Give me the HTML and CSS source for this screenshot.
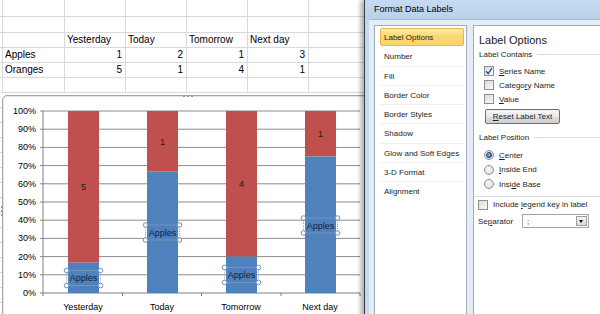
FILE: index.html
```html
<!DOCTYPE html>
<html lang="en">

<head>
    <meta charset="UTF-8">
    <title>Format Data Labels</title>
    <link rel="stylesheet" href="styles.css">
</head>

<body>
    <div class="sheet">
        <div></div><div></div><div></div><div></div><div></div><div></div><div></div><div></div>
        <div></div><div></div><div></div><div></div><div></div><div></div><div></div><div></div>
        <div></div><div></div><div>Yesterday</div><div>Today</div><div>Tomorrow</div><div>Next day</div><div></div><div></div>
        <div></div><div>Apples</div><div class="num">1</div><div class="num">2</div><div class="num">1</div><div class="num">3</div><div></div><div></div>
        <div></div><div>Oranges</div><div class="num">5</div><div class="num">1</div><div class="num">4</div><div class="num">1</div><div></div><div></div>
        <div></div><div></div><div></div><div></div><div></div><div></div><div></div><div></div>
    </div>
    <div class="sheet-rest"></div>

    <!-- chart object floating over the sheet -->
    <div class="chart">
        <span class="grip grip-top"></span>
        <span class="grip grip-left"></span>
        <svg width="362" height="230" viewBox="0 0 362 230">
            <g class="grid">
                <line x1="37" y1="15" x2="357" y2="15" />
                <line x1="37" y1="33.2" x2="357" y2="33.2" />
                <line x1="37" y1="51.4" x2="357" y2="51.4" />
                <line x1="37" y1="69.6" x2="357" y2="69.6" />
                <line x1="37" y1="87.8" x2="357" y2="87.8" />
                <line x1="37" y1="106" x2="357" y2="106" />
                <line x1="37" y1="124.2" x2="357" y2="124.2" />
                <line x1="37" y1="142.4" x2="357" y2="142.4" />
                <line x1="37" y1="160.6" x2="357" y2="160.6" />
                <line x1="37" y1="178.8" x2="357" y2="178.8" />
            </g>
            <g class="axis">
                <line x1="40" y1="15" x2="40" y2="197" />
                <line x1="37" y1="197" x2="357" y2="197" />
                <line x1="40" y1="197" x2="40" y2="200" />
                <line x1="119.5" y1="197" x2="119.5" y2="200" />
                <line x1="198.5" y1="197" x2="198.5" y2="200" />
                <line x1="278" y1="197" x2="278" y2="200" />
                <line x1="357" y1="197" x2="357" y2="200" />
            </g>
            <g class="ylabels">
                <text x="33" y="15">100%</text>
                <text x="33" y="33.2">90%</text>
                <text x="33" y="51.4">80%</text>
                <text x="33" y="69.6">70%</text>
                <text x="33" y="87.8">60%</text>
                <text x="33" y="106">50%</text>
                <text x="33" y="124.2">40%</text>
                <text x="33" y="142.4">30%</text>
                <text x="33" y="160.6">20%</text>
                <text x="33" y="178.8">10%</text>
                <text x="33" y="197">0%</text>
            </g>

            <rect class="oranges" x="65" y="15" width="31" height="151.67" />
            <rect class="apples" x="65" y="166.67" width="31" height="30.33" />
            <rect class="oranges" x="144" y="15" width="31" height="60.67" />
            <rect class="apples" x="144" y="75.67" width="31" height="121.33" />
            <rect class="oranges" x="223" y="15" width="31" height="145.6" />
            <rect class="apples" x="223" y="160.6" width="31" height="36.4" />
            <rect class="oranges" x="302" y="15" width="31" height="45.5" />
            <rect class="apples" x="302" y="60.5" width="31" height="136.5" />

            <g class="values">
                <text x="80.5" y="91">5</text>
                <text x="159.5" y="45.5">1</text>
                <text x="238.5" y="88">4</text>
                <text x="317.5" y="38">1</text>
            </g>

            <g class="sel">
                <rect x="63.5" y="174.5" width="34" height="15" />
                <circle cx="63.5" cy="174.5" r="2.3" /><circle cx="97.5" cy="174.5" r="2.3" />
                <circle cx="63.5" cy="189.5" r="2.3" /><circle cx="97.5" cy="189.5" r="2.3" />
                <rect x="142.5" y="129" width="34" height="15" />
                <circle cx="142.5" cy="129" r="2.3" /><circle cx="176.5" cy="129" r="2.3" />
                <circle cx="142.5" cy="144" r="2.3" /><circle cx="176.5" cy="144" r="2.3" />
                <rect x="221.5" y="171.5" width="34" height="15" />
                <circle cx="221.5" cy="171.5" r="2.3" /><circle cx="255.5" cy="171.5" r="2.3" />
                <circle cx="221.5" cy="186.5" r="2.3" /><circle cx="255.5" cy="186.5" r="2.3" />
                <rect x="300.5" y="122" width="34" height="15" />
                <circle cx="300.5" cy="122" r="2.3" /><circle cx="334.5" cy="122" r="2.3" />
                <circle cx="300.5" cy="137" r="2.3" /><circle cx="334.5" cy="137" r="2.3" />
            </g>
            <g class="labels">
                <text x="80.5" y="182">Apples</text>
                <text x="159.5" y="136.5">Apples</text>
                <text x="238.5" y="179">Apples</text>
                <text x="317.5" y="129.5">Apples</text>
            </g>

            <g class="xlabels">
                <text x="80" y="211">Yesterday</text>
                <text x="159" y="211">Today</text>
                <text x="238" y="211">Tomorrow</text>
                <text x="317" y="211">Next day</text>
            </g>
        </svg>
    </div>

    <!-- dialog window -->
    <div class="dialog">
        <div class="dialog-title">Format Data Labels</div>
        <div class="dialog-body">
            <ul class="nav">
                <li class="active">Label Options</li>
                <li>Number</li>
                <li>Fill</li>
                <li>Border Color</li>
                <li>Border Styles</li>
                <li>Shadow</li>
                <li>Glow and Soft Edges</li>
                <li>3-D Format</li>
                <li class="last">Alignment</li>
            </ul>
            <div class="options">
                <h2>Label Options</h2>
                <div class="group">Label Contains</div>
                <label class="row indent"><span class="check checked"><svg width="8" height="8" viewBox="0 0 8 8"><path d="M1 4.2 L3.2 6.6 L7 1" /></svg></span><span><u>S</u>eries Name</span></label>
                <label class="row indent"><span class="check"></span><span>Catego<u>r</u>y Name</span></label>
                <label class="row indent"><span class="check"></span><span><u>V</u>alue</span></label>
                <button class="btn"><u>R</u>eset Label Text</button>
                <div class="group group-pos">Label Position</div>
                <label class="row indent radio-row"><span class="radio selected"></span><span><u>C</u>enter</span></label>
                <label class="row indent radio-row"><span class="radio"></span><span><u>I</u>nside End</span></label>
                <label class="row indent radio-row"><span class="radio"></span><span>Insi<u>d</u>e Base</span></label>
                <div class="divider"></div>
                <label class="row legend"><span class="check"></span><span>Include <u>l</u>egend key in label</span></label>
                <div class="row separator">
                    <span class="sep-label">Se<u>p</u>arator</span>
                    <span class="select"><span class="select-value">;</span><span class="select-arrow"></span></span>
                </div>
            </div>
        </div>
    </div>
</body>

</html>
```

FILE: styles.css
```css
body {
    margin: 0;
    width: 600px;
    height: 314px;
    overflow: hidden;
    position: relative;
    background-color: white;
    font-family: "Liberation Sans", Arial, sans-serif;
    color: #000;
}

/* spreadsheet */

.sheet {
    display: grid;
    grid-template-columns: 3px 62px repeat(6, 61px);
    grid-template-rows: 17px 16px repeat(4, 15px);
    font-size: 10px;
}

.sheet div {
    border-right: 1px solid #d6d9dd;
    border-bottom: 1px solid #d6d9dd;
    padding: 0 2px;
    line-height: 14px;
    white-space: nowrap;
    overflow: hidden;
}

.sheet div:nth-child(8n+1) {
    padding: 0;
}

.sheet .num {
    text-align: right;
    padding-right: 3px;
}

.sheet-rest {
    height: 230px;
    background-image: repeating-linear-gradient(to bottom, transparent 0 14px, #d6d9dd 14px 15px);
}

/* chart */

.chart {
    position: absolute;
    left: 2px;
    top: 95px;
    width: 362px;
    height: 230px;
    border: 1px solid #a6a6a6;
    border-radius: 5px 0 0 0;
    background-color: white;
    box-shadow: inset 1px 1px 0 #e6e6e6;
}

.chart svg {
    display: block;
}

.grip {
    position: absolute;
    border-top: 2px dotted #9a9a9a;
}

.grip-top {
    left: 180px;
    top: -1px;
    width: 10px;
}

.grip-left {
    left: -2px;
    top: 110px;
    height: 10px;
    border-top: none;
    border-left: 2px dotted #9a9a9a;
}

.grid line {
    stroke: #8c8c8c;
    stroke-width: 1;
}

.axis line {
    stroke: #7f7f7f;
    stroke-width: 1;
}

.ylabels text {
    font-size: 9px;
    text-anchor: end;
    dominant-baseline: central;
    fill: #000;
}

.xlabels text,
.values text,
.labels text {
    font-size: 9px;
    text-anchor: middle;
    dominant-baseline: central;
}

.values text {
    fill: #1a1a1a;
}

.labels text {
    fill: #0f1f3d;
}

.apples {
    fill: #4f81bd;
}

.oranges {
    fill: #c0504d;
}

.sel rect {
    fill: none;
    stroke: #98a6b8;
    stroke-width: 1;
    stroke-dasharray: 1 1;
}

.sel circle {
    fill: #f4f8fc;
    stroke: #6f95c4;
    stroke-width: 1;
}

/* dialog */

.dialog {
    position: absolute;
    left: 364px;
    top: 0;
    width: 250px;
    height: 320px;
    background-color: #c3d7ee;
    border-left: 1px solid #3a3f46;
    box-shadow: -3px 0 5px rgba(0, 0, 0, 0.35);
    font-size: 8px;
    color: #1e1e1e;
}

.dialog-title {
    height: 19px;
    line-height: 19px;
    padding-left: 9px;
    font-size: 9px;
    color: #000;
    background: linear-gradient(#c6dbf2, #b9d1ec);
}

.dialog-body {
    display: flex;
    gap: 6px;
    height: 300px;
    margin-left: 4px;
    padding: 5px 0 0 5px;
    background-color: #e4ecf6;
    border-top: 1px solid #a9bcd4;
}

.nav {
    width: 93px;
    box-sizing: border-box;
    margin: 0;
    padding: 2px 2px 0 5px;
    list-style: none;
    background-color: white;
    border: 1px solid #9eabbb;
}

.nav li {
    height: 19.3px;
    line-height: 19px;
    padding-left: 4px;
    box-sizing: border-box;
    border-bottom: 1px solid #efefef;
    white-space: nowrap;
}

.nav li.last {
    border-bottom: none;
}

.nav li.active {
    height: 18.3px;
    margin-bottom: 1px;
    line-height: 17px;
    padding-left: 3px;
    border: 1px solid #e5b651;
    border-radius: 2px;
    background: linear-gradient(#fde9a8, #fbd670 50%, #fbd569);
}

.options {
    flex: 1;
    padding: 7px 0 0 5px;
    background-color: white;
    border: 1px solid #9eabbb;
    border-right: none;
}

.options h2 {
    margin: 0;
    height: 14px;
    line-height: 14px;
    font-size: 11px;
    font-weight: normal;
    color: #1a1a1a;
}

.group {
    display: flex;
    align-items: center;
    gap: 5px;
    height: 12px;
    margin-top: 1px;
}

.group::after {
    content: "";
    flex: 1;
    border-top: 1px solid #d6dde6;
}

.group-pos {
    margin-top: 7px;
}

.row {
    display: flex;
    align-items: center;
    height: 14px;
}

.indent {
    padding-left: 5px;
}

.indent:first-of-type {
    margin-top: 4px;
}

.group + .row {
    margin-top: 4px;
}

.group-pos + .row {
    margin-top: 5px;
}

.radio-row {
    height: 14.5px;
}

.check,
.radio {
    display: inline-flex;
    align-items: center;
    justify-content: center;
    width: 10px;
    height: 10px;
    box-sizing: border-box;
    margin-right: 5px;
    border: 1px solid #8e8f8f;
    background: linear-gradient(135deg, #dcdcdc, #f8f8f8);
}

.check.checked {
    background: linear-gradient(135deg, #d4dff0, #f6f8fc);
}

.check path {
    fill: none;
    stroke: #2a4c8c;
    stroke-width: 1.3;
}

.radio {
    border-radius: 50%;
    background: radial-gradient(circle at 40% 40%, #fbfbfb, #d4d4d4);
}

.radio.selected::after {
    content: "";
    width: 4px;
    height: 4px;
    border-radius: 50%;
    border: 1px solid #1d3f6e;
    background: radial-gradient(circle at 40% 40%, #8ac4f0, #1f5a9e);
}

.btn {
    display: block;
    width: 75px;
    height: 15px;
    margin: 3px 0 0 6px;
    padding: 0;
    font-family: inherit;
    font-size: 8px;
    color: #1e1e1e;
    border: 1px solid #707070;
    border-radius: 2px;
    background: linear-gradient(#f4f4f4, #ebebeb 50%, #dddddd 51%, #cfcfcf);
}

.divider {
    margin: 4px 0 0 -5px;
    border-top: 1px solid #d6dde6;
}

.legend {
    margin-top: 1px;
    margin-left: -1px;
}

.legend .check {
    margin-right: 5px;
}

.separator {
    height: 15px;
    margin-top: 2px;
    margin-left: -1px;
}

.sep-label {
    width: 44px;
}

.select {
    display: flex;
    align-items: center;
    width: 67px;
    height: 14px;
    box-sizing: border-box;
    border: 1px solid #a4a4a4;
    background-color: white;
}

.select-value {
    flex: 1;
    padding-left: 4px;
}

.select-arrow {
    width: 11px;
    height: 10px;
    margin-right: 1px;
    box-sizing: border-box;
    border: 1px solid #9c9c9c;
    background: linear-gradient(#f6f6f6, #dadada);
    position: relative;
}

.select-arrow::after {
    content: "";
    position: absolute;
    left: 2px;
    top: 3px;
    border-left: 2.5px solid transparent;
    border-right: 2.5px solid transparent;
    border-top: 3px solid #000;
}
```
